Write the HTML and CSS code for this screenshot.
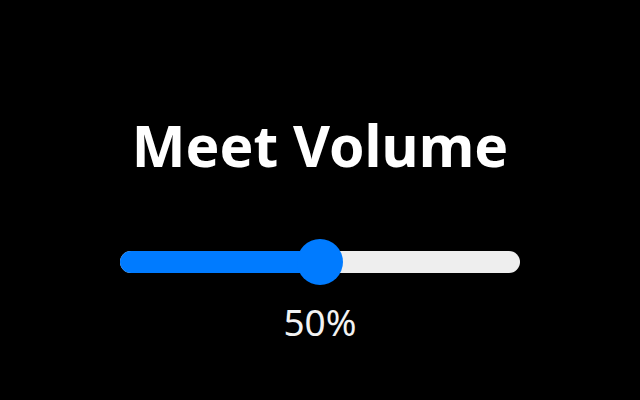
FILE: index.html
```html
<!DOCTYPE html>
<html lang="en">
<head>
<meta charset="utf-8">
<title>Meet Volume</title>
<link rel="stylesheet" href="styles.css">
</head>
<body>
<main class="panel">
  <h1 class="title">Meet Volume</h1>
  <div class="slider" role="slider" aria-valuenow="50" aria-valuemin="0" aria-valuemax="100">
    <div class="track">
      <div class="fill" style="width: 50%"></div>
    </div>
    <div class="thumb" style="left: 50%"></div>
  </div>
  <div class="value">50%</div>
</main>
</body>
</html>
```

FILE: styles.css
```css
html, body {
  margin: 0;
  padding: 0;
  background: #000;
}

body {
  width: 640px;
  height: 400px;
  overflow: hidden;
  font-family: "Noto Sans", "Open Sans", "Liberation Sans", sans-serif;
  color: #fff;
}

.panel {
  display: flex;
  flex-direction: column;
  align-items: center;
  padding-top: 117px;
}

.title {
  margin: 0;
  font-size: 57px;
  font-weight: 700;
  line-height: 1;
  color: #fff;
}

.slider {
  position: relative;
  width: 400px;
  height: 46px;
  margin-top: 65px;
  display: flex;
  align-items: center;
}

.track {
  width: 100%;
  height: 22px;
  border-radius: 11px;
  background: #eeeeee;
  overflow: hidden;
}

.fill {
  height: 100%;
  background: #007bff;
}

.thumb {
  position: absolute;
  top: 0;
  width: 46px;
  height: 46px;
  margin-left: -23px;
  border-radius: 50%;
  background: #007bff;
}

.value {
  margin-top: 18px;
  font-size: 37px;
  line-height: 1;
  color: #f2f2f2;
}
```
